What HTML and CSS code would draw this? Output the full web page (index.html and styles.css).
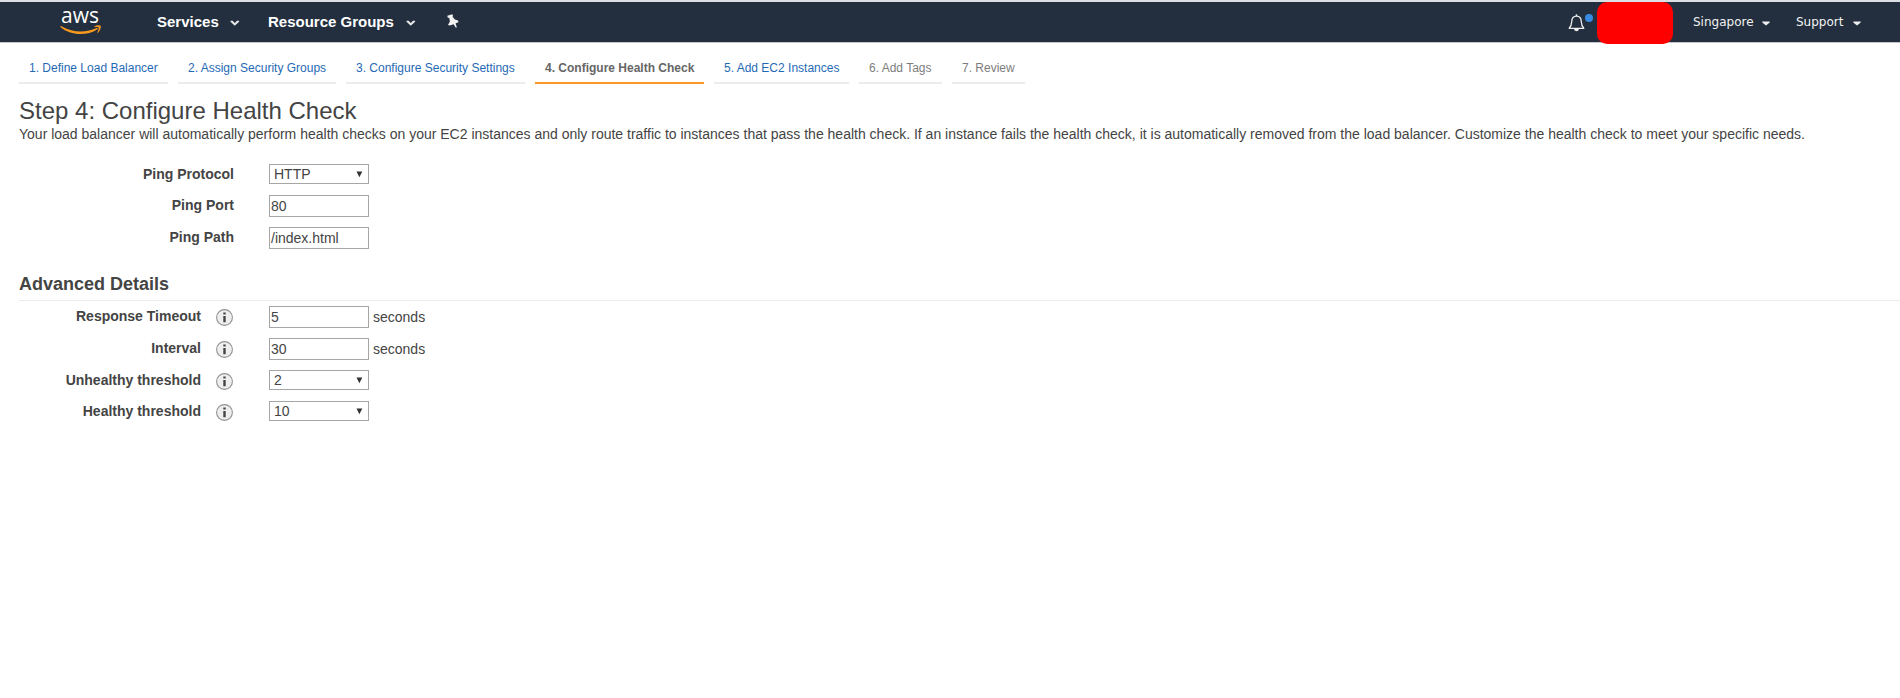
FILE: index.html
```html
<!DOCTYPE html>
<html lang="en">
<head>
<meta charset="utf-8">
<title>Configure Health Check</title>
<link rel="stylesheet" href="styles.css">
</head>
<body>
<header class="topbar">
  <a class="logo"><span class="logo-text">aws</span>
    <svg class="logo-smile" width="42" height="10" viewBox="0 0 42 10"><path d="M.3 1.6Q.8.7 1.9 1.4C13 7.8 26 7.900 36.500 3.100Q38.500 2.600 37.500 4.200C27 11.300 10 10.600.6 2.300Z" fill="#f7981f"/><path d="M34.300 1.500C36.500.1 39.800 0 40.600.8S40.200 5.900 38 7.800Q37.100 8.100 37.400 7.300C38.300 5.100 39.200 3 38.600 2.400S36.300 1.900 34.800 2.100Q33.700 2.100 34.300 1.500Z" fill="#f7981f"/></svg>
  </a>
  <nav class="menu">
    <a class="menu-item services">Services</a>
    <svg class="chev" width="10" height="7" viewBox="0 0 10 7"><path d="M.5.800H2.600L4.800 2.900 7 .800H9.100V1.800L4.800 5.700.5 1.800Z" fill="#e6e6e6"/></svg>
    <a class="menu-item groups">Resource Groups</a>
    <svg class="chev" width="10" height="7" viewBox="0 0 10 7"><path d="M.5.800H2.600L4.800 2.900 7 .800H9.100V1.800L4.800 5.700.5 1.800Z" fill="#e6e6e6"/></svg>
    <svg class="pin" width="14" height="15" viewBox="0 0 14 15"><path d="M1.300 1.800 6.300.2 7.100 2 6.500 2.800 8.900 5.600 12 6.400 12.500 8.300 9.600 9.300 10.800 13.300 9.900 13.700 7.600 10.200 3.700 11.500 2 10.900 3.900 7.500 3.300 3.900 1.700 3.600Z" fill="#f2f2f2"/></svg>
  </nav>
  <div class="account">
    <svg class="bell" width="17" height="18" viewBox="0 0 17 18"><path d="M1.200 14.300C3.200 12.300 3.600 10.800 3.700 7.800 3.800 4 5.600 2.100 8.500 2.100S13.200 4 13.300 7.800C13.400 10.800 13.800 12.300 15.800 14.300Z" fill="none" stroke="#eee" stroke-width="1.300" stroke-linejoin="round"/><path d="M8.500.3V2" stroke="#eee" stroke-width="1.500"/><path d="M6 15h5Q10.500 17.300 8.500 17.300T6 15Z" fill="#eee"/></svg>
    <span class="dot"></span>
    <span class="user"></span>
    <a class="region">Singapore</a>
    <svg class="caret" width="8" height="5" viewBox="0 0 8 5"><path d="M.3.500H7.700V1.500L4 4.500.3 1.500Z" fill="#eee"/></svg>
    <a class="support">Support</a>
    <svg class="caret" width="8" height="5" viewBox="0 0 8 5"><path d="M.3.500H7.700V1.500L4 4.500.3 1.500Z" fill="#eee"/></svg>
  </div>
</header>
<main class="page">
  <nav class="steps">
    <a class="step w1">1. Define Load Balancer</a>
    <a class="step w2">2. Assign Security Groups</a>
    <a class="step w3">3. Configure Security Settings</a>
    <a class="step w4 active">4. Configure Health Check</a>
    <a class="step w5">5. Add EC2 Instances</a>
    <a class="step w6 pending">6. Add Tags</a>
    <a class="step w7 pending">7. Review</a>
  </nav>
  <h1 class="title">Step 4: Configure Health Check</h1>
  <p class="intro">Your load balancer will automatically perform health checks on your EC2 instances and only route traffic to instances that pass the health check. If an instance fails the health check, it is automatically removed from the load balancer. Customize the health check to meet your specific needs.</p>
  <section class="form basic">
    <div class="row short"><span class="label">Ping Protocol</span><div class="select">HTTP<svg class="arrow" width="7" height="7" viewBox="0 0 7 7"><path d="M.5.500H6.300L3.400 6.300Z"/></svg></div></div>
    <div class="row"><span class="label">Ping Port</span><div class="input">80</div></div>
    <div class="row"><span class="label">Ping Path</span><div class="input">/index.html</div></div>
  </section>
  <h2 class="subtitle">Advanced Details</h2>
  <section class="form advanced">
    <div class="row"><span class="label">Response Timeout</span><svg class="info" width="17" height="17" viewBox="0 0 17 17"><circle cx="8.500" cy="8.500" r="7.900"/><path d="M7.300 3.600h2.400v2H7.300ZM7.300 6.900h2.400v6.300H7.300Z"/></svg><div class="input">5</div><span class="unit">seconds</span></div>
    <div class="row"><span class="label">Interval</span><svg class="info" width="17" height="17" viewBox="0 0 17 17"><circle cx="8.500" cy="8.500" r="7.900"/><path d="M7.300 3.600h2.400v2H7.300ZM7.300 6.900h2.400v6.300H7.300Z"/></svg><div class="input">30</div><span class="unit">seconds</span></div>
    <div class="row short"><span class="label">Unhealthy threshold</span><svg class="info" width="17" height="17" viewBox="0 0 17 17"><circle cx="8.500" cy="8.500" r="7.900"/><path d="M7.300 3.600h2.400v2H7.300ZM7.300 6.900h2.400v6.300H7.300Z"/></svg><div class="select">2<svg class="arrow" width="7" height="7" viewBox="0 0 7 7"><path d="M.5.500H6.300L3.400 6.300Z"/></svg></div></div>
    <div class="row short"><span class="label">Healthy threshold</span><svg class="info" width="17" height="17" viewBox="0 0 17 17"><circle cx="8.500" cy="8.500" r="7.900"/><path d="M7.300 3.600h2.400v2H7.300ZM7.300 6.900h2.400v6.300H7.300Z"/></svg><div class="select">10<svg class="arrow" width="7" height="7" viewBox="0 0 7 7"><path d="M.5.500H6.300L3.400 6.300Z"/></svg></div></div>
  </section>
</main>
</body>
</html>
```
FILE: styles.css
```css
* { box-sizing: border-box; }
body { margin: 0; background: #fff; color: #444; font: 14px/20px "Liberation Sans", Arial, sans-serif; overflow: hidden; }
svg { display: block; flex: none; }
.topbar { display: flex; height: 43px; background: #232f3e; border-top: 2px solid #dcdfe3; border-bottom: 1px solid #c4c6ca; }
.logo { width: 42px; margin-left: 60px; height: 40px; }
.logo-text { display: block; height: 22px; padding-left: 1px; color: #fff; font: 500 21px/26px "Open Sans", sans-serif; }
.logo-smile { margin-top: 1px; }
.menu { display: flex; align-items: center; margin-left: 55px; height: 39px; color: #fff; font-weight: bold; font-size: 15px; white-space: nowrap; }
.services { width: 73px; }
.groups { width: 138px; margin-left: 28px; }
.chev { margin-top: 4px; }
.pin { margin-left: 30px; }
.account { display: flex; margin-left: auto; padding-right: 39px; color: #f2f2f2; font: 12px/39px "DejaVu Sans", Verdana, sans-serif; }
.bell { margin-top: 12px; }
.dot { width: 8px; height: 8px; margin-top: 12px; border-radius: 50%; background: #378ae0; }
.user { width: 76px; height: 42px; margin-left: 4px; border-radius: 10px; background: #f00; }
.region { width: 69px; margin-left: 20px; padding-top: 1px; }
.support { width: 57px; margin-left: 26px; padding-top: 1px; }
.caret { margin-top: 19px; }
.page { padding-left: 19px; }
.steps { display: flex; gap: 10px; padding-top: 15px; }
.step { height: 26px; padding-left: 10px; border-bottom: 2px solid #ececec; color: #1f6ab5; font-size: 12px; line-height: 20px; white-space: nowrap; }
.active { border-color: #fa9827; color: #666; font-weight: bold; }
.pending { color: #7d7d7d; }
.w1 { width: 149px; } .w2 { width: 158px; } .w3 { width: 179px; } .w4 { width: 169px; }
.w5 { width: 135px; } .w6 { width: 83px; } .w7 { width: 73px; }
.title { margin: 14px 0 0; height: 25px; font-size: 24px; line-height: 25px; font-weight: normal; }
.intro { margin: 1px 0 0; line-height: 20px; white-space: nowrap; }
.form { display: grid; }
.basic { margin-top: 20px; }
.row { display: grid; grid-template-columns: 182px 33px 35px 100px auto; height: 32px; align-items: start; }
.short { height: 31px; }
.label { grid-column: 1; text-align: right; font-weight: bold; white-space: nowrap; }
.basic .label { grid-column: 1 / 3; }
.info { grid-column: 2; margin: 3px 0 0 15px; }
.info circle { fill: #eee; stroke: #929292; stroke-width: 1.1; }
.info path { fill: #444; }
.input, .select { grid-column: 4; width: 100px; border: 1px solid #a6a6a6; background: #fff; }
.input { height: 22px; padding-left: 1px; line-height: 21px; }
.select { display: flex; justify-content: space-between; height: 20px; padding: 0 5.5px 0 4px; line-height: 19px; }
.arrow { margin-top: 6px; fill: #333; }
.unit { padding: 1px 0 0 4px; }
.subtitle { margin: 16px 0 0; height: 26px; border-bottom: 1px solid #ececec; font-size: 18px; line-height: 18px; }
.advanced { margin-top: 5px; }
```
